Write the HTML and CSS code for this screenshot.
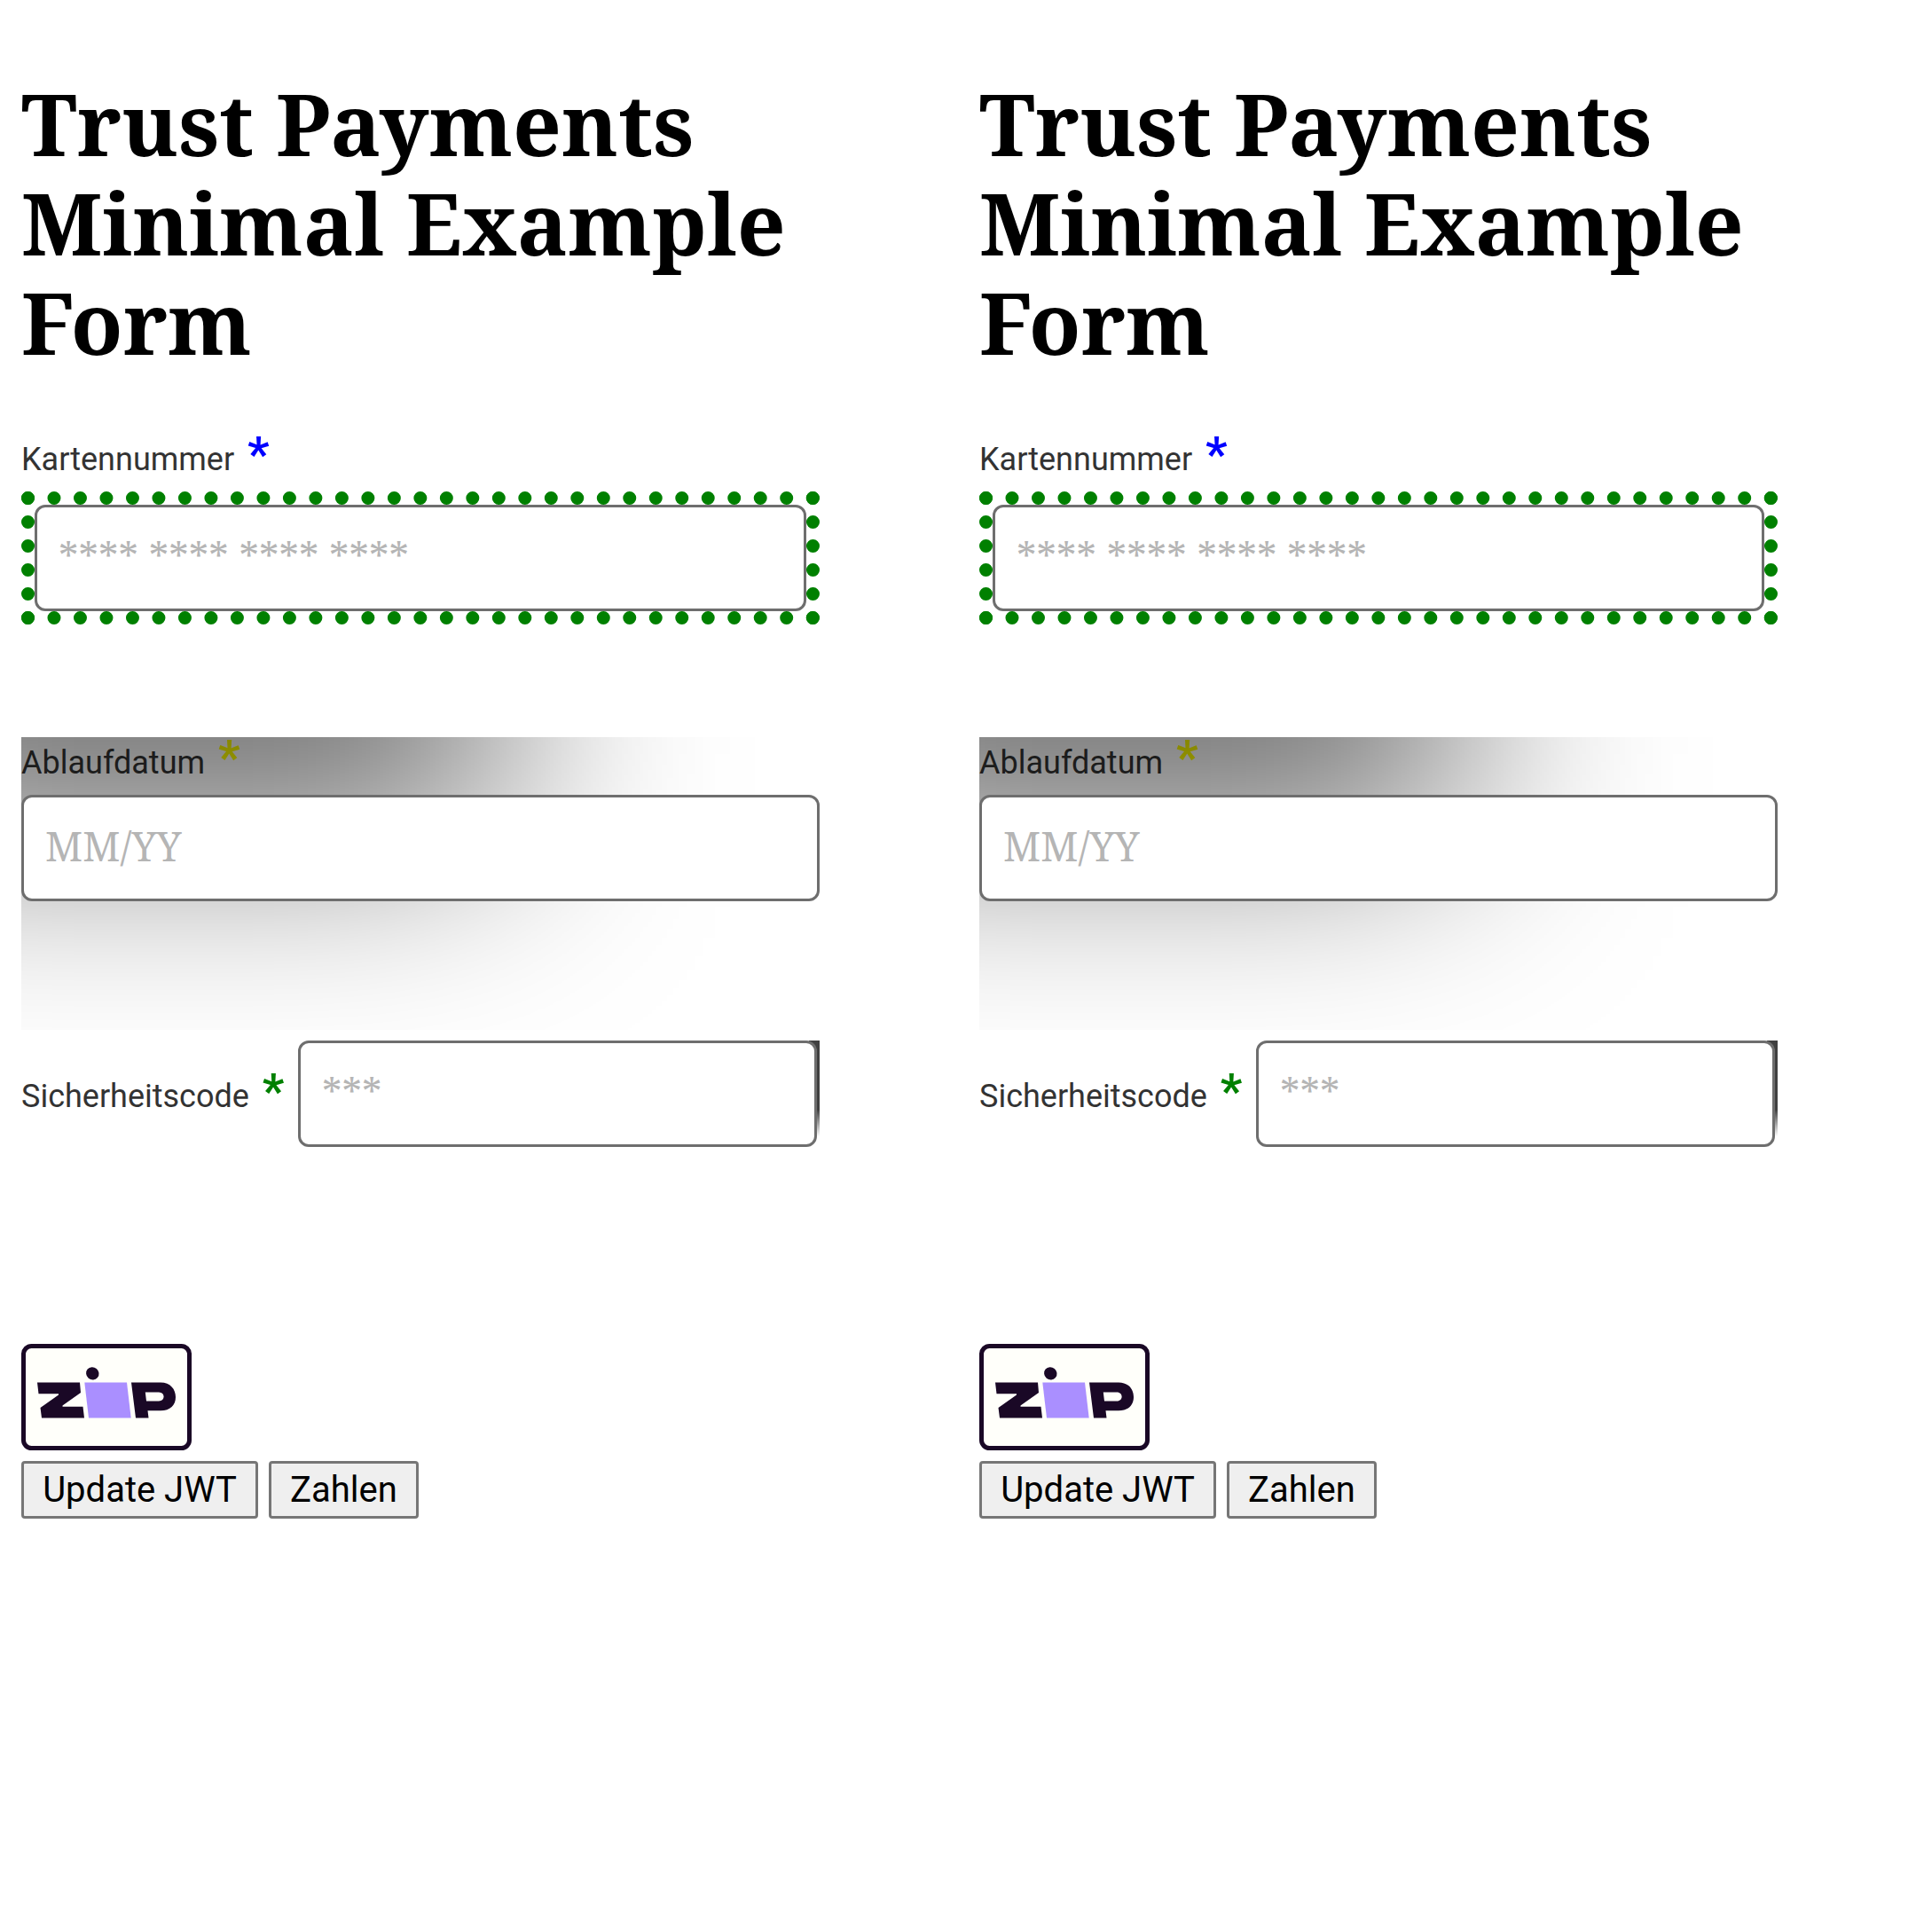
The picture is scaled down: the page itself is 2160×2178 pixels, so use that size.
FILE: index.html
```html
<!DOCTYPE html>
<html lang="de">
<head>
<meta charset="utf-8">
<title>Trust Payments</title>
<link rel="stylesheet" href="styles.css">
</head>
<body>
<main class="columns">
  <section class="pane">
    <h1 class="title">Trust Payments Minimal Example Form</h1>
    <div class="field">
      <div class="label">Kartennummer <span class="star star-blue">*</span></div>
      <div class="dotted"><div class="input">**** **** **** ****</div></div>
    </div>
    <div class="field shaded">
      <div class="label">Ablaufdatum <span class="star star-yellow">*</span></div>
      <div class="input input-date">MM/YY</div>
    </div>
    <div class="field inline">
      <div class="label">Sicherheitscode <span class="star star-green">*</span></div>
      <div class="input">***</div>
      <div class="edge"></div>
    </div>
    <svg class="zip" viewBox="0 0 192 120" role="img" aria-label="Zip">
      <rect x="2.5" y="2.5" width="187" height="115" rx="9" fill="#fffffa" stroke="#1a0826" stroke-width="5"/>
      <path fill="#1a0826" d="M18 43.500H66L67 55L46.500 69.500V70.800H69.500L71 83.500H23L21.500 72L42 57.500V56.200H19.500Z"/>
      <path fill="#aa8fff" d="M71.300 43.500H119L123.700 83.500H76Z"/>
      <ellipse cx="80.300" cy="33.300" rx="7.400" ry="7" transform="rotate(40 80.300 33.300)" fill="#1a0826"/>
      <path fill="#1a0826" fill-rule="evenodd" d="M124 43.500H157C168 43.500 174 51 174 60C174 69 168 75.300 157 75.300H142.500L143.500 83.500H129ZM139.800 54.500L141 64.500H155C162.500 64.500 162.500 54.500 155 54.500Z"/>
    </svg>
    <div class="actions"><button class="button update" type="button">Update JWT</button><button class="button pay" type="button">Zahlen</button></div>
  </section>
  <section class="pane">
    <h1 class="title">Trust Payments Minimal Example Form</h1>
    <div class="field">
      <div class="label">Kartennummer <span class="star star-blue">*</span></div>
      <div class="dotted"><div class="input">**** **** **** ****</div></div>
    </div>
    <div class="field shaded">
      <div class="label">Ablaufdatum <span class="star star-yellow">*</span></div>
      <div class="input input-date">MM/YY</div>
    </div>
    <div class="field inline">
      <div class="label">Sicherheitscode <span class="star star-green">*</span></div>
      <div class="input">***</div>
      <div class="edge"></div>
    </div>
    <svg class="zip" viewBox="0 0 192 120" role="img" aria-label="Zip">
      <rect x="2.5" y="2.5" width="187" height="115" rx="9" fill="#fffffa" stroke="#1a0826" stroke-width="5"/>
      <path fill="#1a0826" d="M18 43.500H66L67 55L46.500 69.500V70.800H69.500L71 83.500H23L21.500 72L42 57.500V56.200H19.500Z"/>
      <path fill="#aa8fff" d="M71.300 43.500H119L123.700 83.500H76Z"/>
      <ellipse cx="80.300" cy="33.300" rx="7.400" ry="7" transform="rotate(40 80.300 33.300)" fill="#1a0826"/>
      <path fill="#1a0826" fill-rule="evenodd" d="M124 43.500H157C168 43.500 174 51 174 60C174 69 168 75.300 157 75.300H142.500L143.500 83.500H129ZM139.800 54.500L141 64.500H155C162.500 64.500 162.500 54.500 155 54.500Z"/>
    </svg>
    <div class="actions"><button class="button update" type="button">Update JWT</button><button class="button pay" type="button">Zahlen</button></div>
  </section>
</main>
</body>
</html>
```

FILE: styles.css
```css
* { box-sizing: border-box; }
body { margin: 0; background: #fff; font-family: Roboto, sans-serif; }
.columns { display: grid; grid-template-columns: 1080px 1080px; }
.pane { padding: 83px 156px 0 24px; display: flex; flex-direction: column; align-items: stretch; gap: 12px; }
.title {
  margin: 0 0 58px;
  font: bold 96px/112px "Noto Serif", serif;
  color: #000;
}
.field { position: relative; height: 330px; }
.label { height: 65px; font-size: 36px; line-height: 58px; color: #333; white-space: nowrap; }
.star { font-size: 54px; font-weight: 700; line-height: 0; margin-left: 6px; }
.star-blue { color: #00f; }
.star-yellow { color: #ff0; }
.star-green { color: #008000; }
.dotted { height: 150px; border: 15px dotted #008000; }
.input {
  position: relative;
  z-index: 2;
  height: 120px;
  border: 3px solid #6e6e6e;
  border-radius: 12px;
  background: #fff;
  padding-left: 24px;
  font: 45px/112px "Noto Serif", serif;
  color: #b5b5b5;
}
.input-date { line-height: 110px; }
/* Soft shadow falling from the top left corner over the label */
.shaded { overflow: hidden; }
.shaded::after {
  content: "";
  position: absolute;
  z-index: 1;
  left: -220px;
  top: -211px;
  width: 760px;
  height: 320px;
  background: rgba(0, 0, 0, .6);
  filter: blur(124px);
}
.inline { display: flex; align-items: flex-start; }
.inline .label { width: 312px; padding-top: 34px; }
.inline .input { flex: 0 0 585px; }
.edge {
  width: 12px;
  height: 120px;
  margin-left: -9px;
  background: linear-gradient(#404040 0 78px, #fff 108px);
}
.zip { width: 192px; height: 120px; display: block; }
.actions { display: flex; gap: 12px; }
.button {
  height: 65px;
  padding: 0;
  border: 3px solid #767676;
  border-radius: 4px;
  background: #efefef;
  color: #000;
  font: 40px/56px Roboto, sans-serif;
}
.update { width: 267px; }
.pay { width: 169px; }
```
